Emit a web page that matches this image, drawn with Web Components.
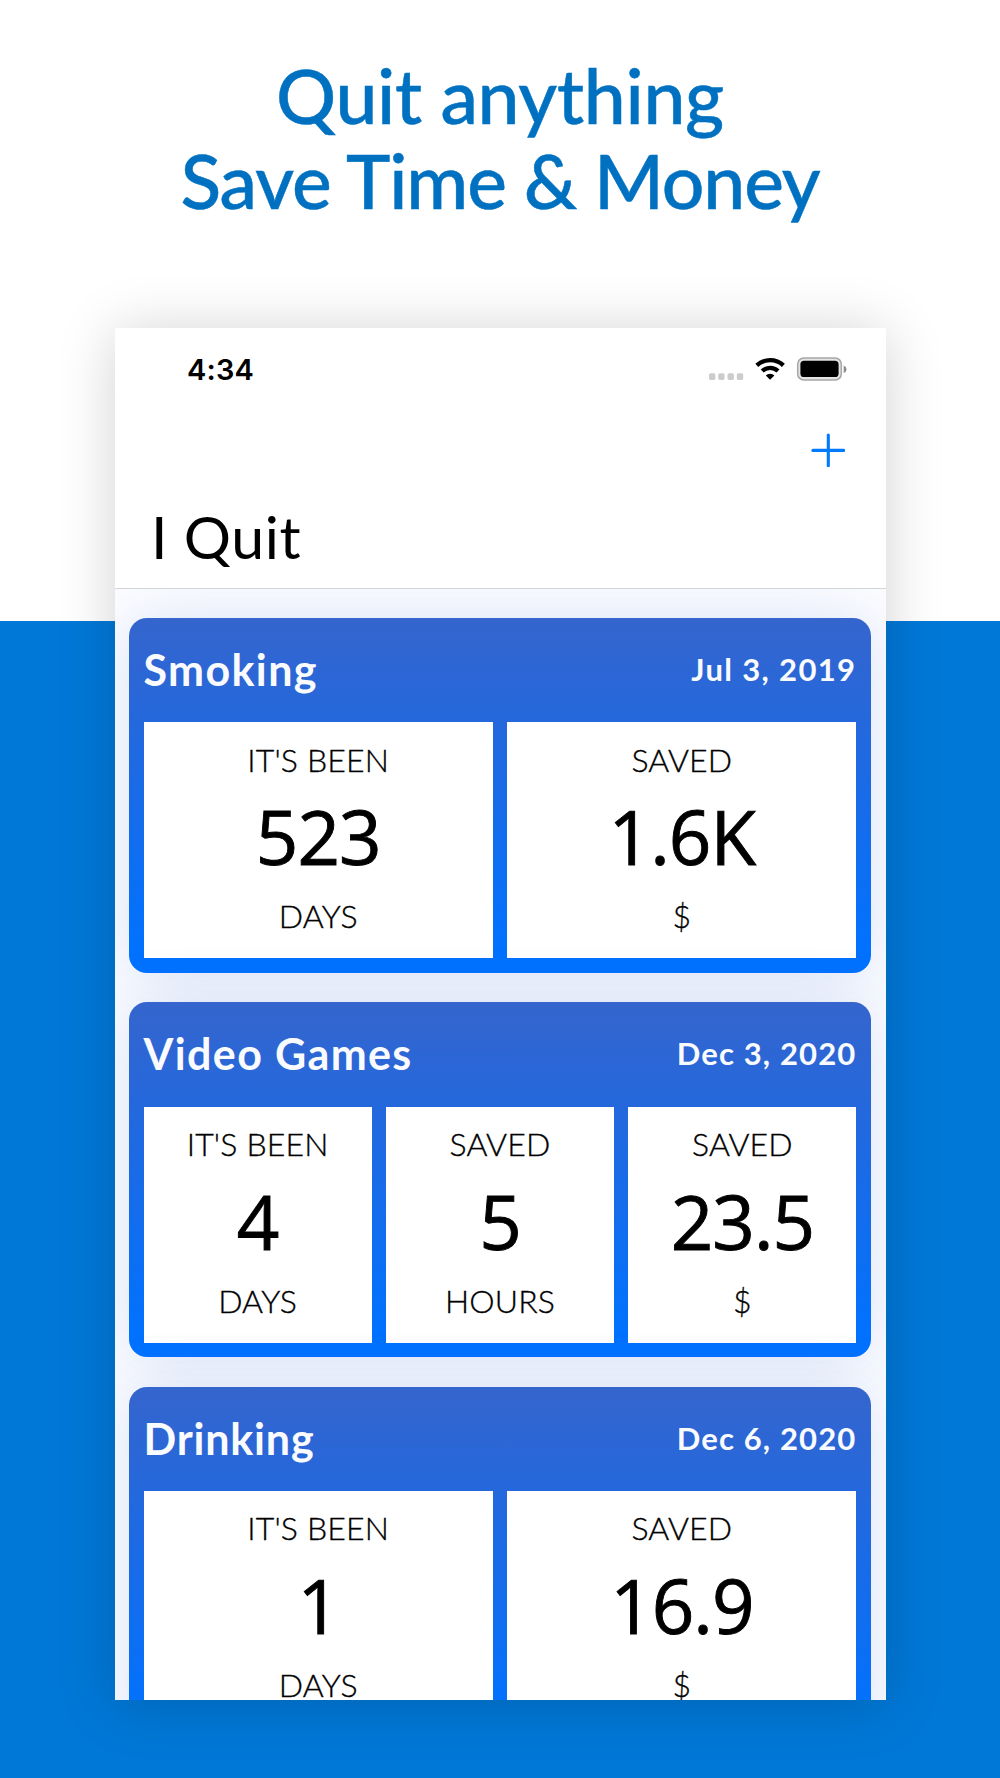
<!DOCTYPE html>
<html lang="en">
<head>
<meta charset="UTF-8">
<title>I Quit</title>
<style>
    body {
        margin: 0;
        font-family: Lato, sans-serif;
    }
</style>
</head>
<body>
<promo-page>
    <promo-title slot="title">
        <span style="letter-spacing: -0.3px">Quit anything</span>
        <span style="letter-spacing: -1.1px">Save Time &amp; Money</span>
    </promo-title>
    <phone-screen>
        <status-bar slot="status" time="4:34"></status-bar>
        <nav-header slot="header">I Quit</nav-header>
        <habit-card name="Smoking" date="Jul 3, 2019" style="--date-spacing: 1.35px">
            <stat-box label="IT'S BEEN" value="523" unit="DAYS"></stat-box>
            <stat-box label="SAVED" value="1.6K" unit="$"></stat-box>
        </habit-card>
        <habit-card name="Video Games" date="Dec 3, 2020">
            <stat-box label="IT'S BEEN" value="4" unit="DAYS"></stat-box>
            <stat-box label="SAVED" value="5" unit="HOURS"></stat-box>
            <stat-box label="SAVED" value="23.5" unit="$"></stat-box>
        </habit-card>
        <habit-card name="Drinking" date="Dec 6, 2020" style="--name-spacing: 0.8px">
            <stat-box label="IT'S BEEN" value="1" unit="DAYS"></stat-box>
            <stat-box label="SAVED" value="16.9" unit="$"></stat-box>
        </habit-card>
    </phone-screen>
</promo-page>

<script>
class PromoPage extends HTMLElement {
    connectedCallback() {
        this.attachShadow({ mode: 'open' }).innerHTML = `
        <style>
        :host {
            display: flex;
            flex-direction: column;
            align-items: center;
            box-sizing: border-box;
            width: 1000px;
            height: 1778px;
            overflow: hidden;
            background: linear-gradient(#ffffff 621.5px, #0078d7 621.5px);
        }
        </style>
        <slot name="title"></slot>
        <slot></slot>
        `;
    }
}

class PromoTitle extends HTMLElement {
    connectedCallback() {
        this.attachShadow({ mode: 'open' }).innerHTML = `
        <style>
        :host {
            display: flex;
            flex-direction: column;
            align-items: center;
            box-sizing: border-box;
            height: 327.5px;
            padding-top: 53px;
            color: #0071c1;
            font-size: 75px;
            font-weight: 500;
            line-height: 84.5px;
            white-space: nowrap;
            -webkit-text-stroke: 0.5px #0071c1;
        }
        </style>
        <slot></slot>
        `;
    }
}

class PhoneScreen extends HTMLElement {
    connectedCallback() {
        this.attachShadow({ mode: 'open' }).innerHTML = `
        <style>
        :host {
            display: flex;
            flex-direction: column;
            width: 771px;
            height: 1372px;
            background-color: #ffffff;
            box-shadow: 0 3px 54px rgba(0, 0, 0, .18);
        }

        .list {
            display: flex;
            flex: 1;
            flex-direction: column;
            gap: 29.5px;
            min-height: 0;
            padding: 29.5px 14.5px 0;
            overflow: hidden;
            background-color: #fcfdff;
        }
        </style>
        <slot name="status"></slot>
        <slot name="header"></slot>
        <div class="list"><slot></slot></div>
        `;
    }
}

class StatusBar extends HTMLElement {
    connectedCallback() {
        this.attachShadow({ mode: 'open' }).innerHTML = `
        <style>
        :host {
            display: flex;
            justify-content: space-between;
            box-sizing: border-box;
            height: 82px;
            padding: 24px 39px 0 72.5px;
            color: #000000;
            font-family: Inter, sans-serif;
            font-size: 29px;
            font-weight: 600;
            line-height: 36px;
            letter-spacing: 0.2px;
        }

        svg {
            display: block;
            margin-top: 3px;
        }
        </style>
        <span>${this.getAttribute('time')}</span>
        <svg width="139" height="28" viewBox="708 355 139 28">
            <g fill="#cccccc">
                <rect x="709" y="373.3" width="6.4" height="6.6" rx="1.6"/>
                <rect x="718.2" y="373.3" width="6.4" height="6.6" rx="1.6"/>
                <rect x="727.5" y="373.3" width="6.4" height="6.6" rx="1.6"/>
                <rect x="736.8" y="373.3" width="6.4" height="6.6" rx="1.6"/>
            </g>
            <g fill="none" stroke="#000000" stroke-width="4.3">
                <path d="M756.8 365.4a19.5 19.5 0 0 1 26.6 0"/>
                <path d="M762.2 371a11.6 11.6 0 0 1 15.8 0"/>
            </g>
            <path d="M770.1 379.8l-4.3-4.3a6.2 6.2 0 0 1 8.6 0z"/>
            <rect x="797.7" y="358.1" width="43.6" height="21.8" rx="6" fill="#e4e4e4" stroke="#a6a6a6" stroke-width="1.5"/>
            <rect x="800.4" y="360.8" width="38.2" height="16.3" rx="3.6"/>
            <path d="M843.7 365.4q2.8 1 2.8 3.8t-2.8 3.8z" fill="#8e8e8e"/>
        </svg>
        `;
    }
}

class NavHeader extends HTMLElement {
    connectedCallback() {
        this.attachShadow({ mode: 'open' }).innerHTML = `
        <style>
        :host {
            display: flex;
            flex-direction: column;
            box-sizing: border-box;
            height: 179px;
            padding: 23px 41px 0 36.5px;
            border-bottom: 1.5px solid #d2d4d8;
            color: #000000;
        }

        svg {
            align-self: flex-end;
            display: block;
        }

        h1 {
            margin: 34px 0 0;
            font-size: 59px;
            font-weight: 400;
            line-height: 72px;
            letter-spacing: 0.6px;
        }
        </style>
        <svg width="34" height="34" viewBox="0 0 34 34">
            <path d="M17.3 2v30.8M1.9 17.4h30.8" stroke="#007aff" stroke-width="3.1" stroke-linecap="round"/>
        </svg>
        <h1><slot></slot></h1>
        `;
    }
}

class HabitCard extends HTMLElement {
    connectedCallback() {
        this.attachShadow({ mode: 'open' }).innerHTML = `
        <style>
        :host {
            display: flex;
            flex: none;
            flex-direction: column;
            box-sizing: border-box;
            height: 354.8px;
            padding: 0 14.6px 14.6px;
            border-radius: 18px;
            background: linear-gradient(#3565cd, #2468dd 30%, #0072ff 94%);
            box-shadow: 0 0 60px rgba(45, 90, 205, .16);
        }

        header {
            display: flex;
            justify-content: space-between;
            height: 104.4px;
            color: #fafbff;
            line-height: 103px;
            white-space: nowrap;
        }

        .name {
            font-size: 43px;
            font-weight: 700;
            letter-spacing: var(--name-spacing, 1.35px);
        }

        .date {
            font-size: 31px;
            font-weight: 700;
            line-height: 102px;
            letter-spacing: var(--date-spacing, 1.15px);
        }

        .stats {
            display: flex;
            flex: 1;
            gap: 14.4px;
        }
        </style>
        <header>
            <span class="name">${this.getAttribute('name')}</span>
            <span class="date">${this.getAttribute('date')}</span>
        </header>
        <div class="stats"><slot></slot></div>
        `;
    }
}

class StatBox extends HTMLElement {
    connectedCallback() {
        this.attachShadow({ mode: 'open' }).innerHTML = `
        <style>
        :host {
            display: flex;
            flex: 1 1 0;
            flex-direction: column;
            align-items: center;
            box-sizing: border-box;
            min-width: 0;
            padding-top: 17.5px;
            background-color: #ffffff;
            color: #000000;
            font-size: 32px;
            font-weight: 300;
            line-height: 40px;
            letter-spacing: 0.15px;
            white-space: nowrap;
            -webkit-text-stroke: 0.35px #000000;
        }

        .value {
            margin: 6.5px 0 10px;
            font-family: "Open Sans", sans-serif;
            font-size: 74.5px;
            font-weight: 500;
            line-height: 100px;
            letter-spacing: -1px;
            -webkit-text-stroke: 0.9px #000000;
        }
        </style>
        <span>${this.getAttribute('label')}</span>
        <span class="value">${this.getAttribute('value')}</span>
        <span>${this.getAttribute('unit')}</span>
        `;
    }
}

customElements.define('promo-page', PromoPage);
customElements.define('promo-title', PromoTitle);
customElements.define('phone-screen', PhoneScreen);
customElements.define('status-bar', StatusBar);
customElements.define('nav-header', NavHeader);
customElements.define('habit-card', HabitCard);
customElements.define('stat-box', StatBox);
</script>
</body>
</html>
